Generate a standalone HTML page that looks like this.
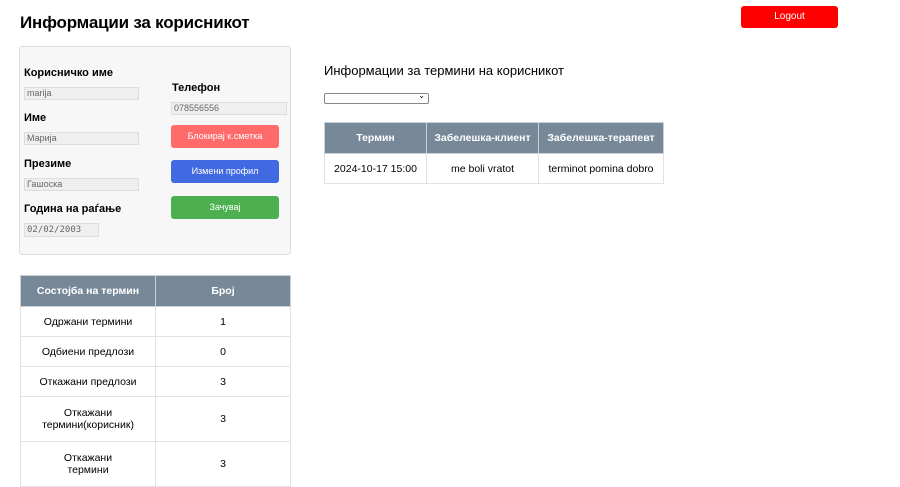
<!DOCTYPE html>
<html><head><meta charset="utf-8"><style>
*{box-sizing:border-box;margin:0;padding:0}
body{width:900px;height:464px;overflow:hidden;background:#fff;font-family:"Liberation Sans","DejaVu Sans",sans-serif;color:#000;position:relative}
.a{position:absolute}
h1{position:absolute;left:20px;top:13px;font-size:17px;font-weight:bold;letter-spacing:-0.2px}
.logout{left:741px;top:6px;width:97px;height:22px;background:#ff0000;border-radius:3px;color:#fff;font-size:10px;text-align:center;line-height:22px}
.card{left:19px;top:46px;width:272px;height:209px;background:#f7f7f7;border:1px solid #ddd;border-radius:3px}
.lbl{font-size:11px;font-weight:bold}
.inp{height:13px;background:#efefef;border:1px solid #ddd;font-size:9px;color:#666;padding-left:2px;line-height:11px}
.btn{left:171px;width:108px;height:23px;border-radius:3px;color:#fff;font-size:9px;text-align:center;line-height:23px}
table{border-collapse:collapse;position:absolute}
td,th{border:1px solid #e2e2e2;text-align:center;font-size:10.5px}
th{background:#778899;color:#fff;font-weight:bold;border-color:#c8d0d8}
</style></head><body>
<h1>Информации за корисникот</h1>
<div class="a logout">Logout</div>
<div class="a card"></div>
<div class="a lbl" style="left:24px;top:67px">Корисничко име</div>
<div class="a inp" style="left:24px;top:87px;width:115px">marija</div>
<div class="a lbl" style="left:24px;top:112px">Име</div>
<div class="a inp" style="left:24px;top:132px;width:115px">Марија</div>
<div class="a lbl" style="left:24px;top:158px">Презиме</div>
<div class="a inp" style="left:24px;top:178px;width:115px">Гашоска</div>
<div class="a lbl" style="left:24px;top:203px">Година на раѓање</div>
<div class="a inp" style="left:24px;top:223px;width:75px;height:14px;font-family:'DejaVu Sans Mono',monospace;line-height:12px">02/02/2003</div>
<div class="a lbl" style="left:172px;top:82px">Телефон</div>
<div class="a inp" style="left:171px;top:102px;width:116px">078556556</div>
<div class="a btn" style="top:125px;background:#ff6b6b">Блокирај к.сметка</div>
<div class="a btn" style="top:160px;background:#4169e1">Измени профил</div>
<div class="a btn" style="top:196px;background:#4caf50">Зачувај</div>

<div class="a" style="left:324px;top:63px;font-size:13px">Информации за термини на корисникот</div>
<div class="a" style="left:324px;top:93px;width:105px;height:11px;border:1px solid #888;border-radius:2px;background:#fff"><span style="position:absolute;right:3px;top:-3px;font-size:8px">⌄</span></div>
<table style="left:324px;top:122px;width:340px">
<tr style="height:31px"><th style="width:102px">Термин</th><th style="width:112px">Забелешка-клиент</th><th>Забелешка-терапевт</th></tr>
<tr style="height:30px"><td>2024-10-17 15:00</td><td>me boli vratot</td><td>terminot pomina dobro</td></tr>
</table>

<table style="left:20px;top:275px;width:271px">
<tr style="height:31px"><th style="width:135px">Состојба на термин</th><th>Број</th></tr>
<tr style="height:30px"><td>Одржани термини</td><td>1</td></tr>
<tr style="height:30px"><td>Одбиени предлози</td><td>0</td></tr>
<tr style="height:30px"><td>Откажани предлози</td><td>3</td></tr>
<tr style="height:45px"><td>Откажани<br>термини(корисник)</td><td>3</td></tr>
<tr style="height:45px"><td>Откажани<br>термини</td><td>3</td></tr>
</table>
</body></html>
